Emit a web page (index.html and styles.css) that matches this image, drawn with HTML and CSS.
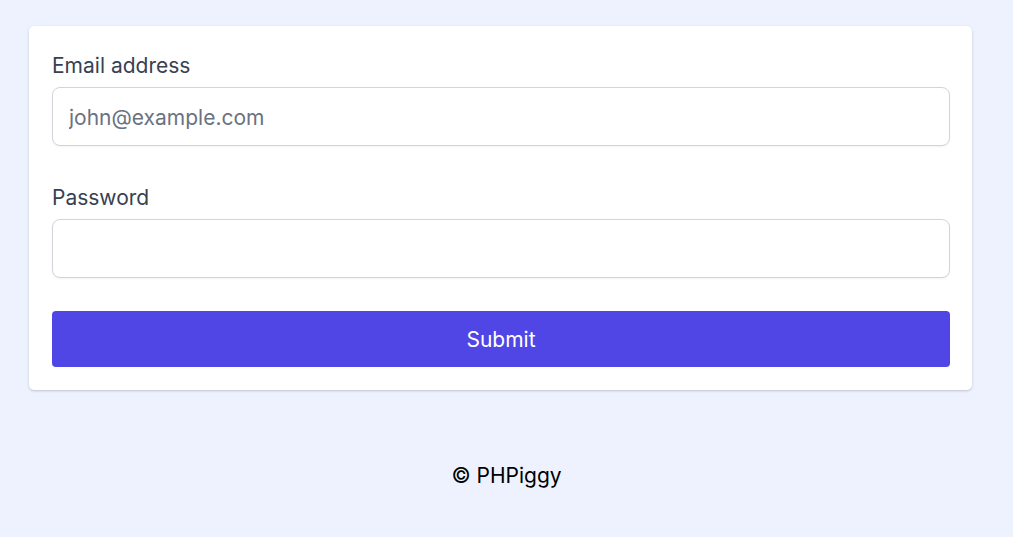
FILE: index.html
```html
<!DOCTYPE html>
<html lang="en">
<head>
<meta charset="utf-8">
<title>Login</title>
<link rel="stylesheet" href="styles.css">
</head>
<body>
<main class="page">
  <section class="card">
    <form class="form">
      <label class="field">
        <span class="label">Email address</span>
        <input class="input" type="email" placeholder="john@example.com">
      </label>
      <label class="field field-second">
        <span class="label">Password</span>
        <input class="input" type="password">
      </label>
      <button class="submit" type="button">Submit</button>
    </form>
  </section>
</main>
<footer class="footer">© PHPiggy</footer>
</body>
</html>
```

FILE: styles.css
```css
* { box-sizing: border-box; }
html, body {
  margin: 0;
  padding: 0;
}
body {
  background: #eef2ff;
  font-family: Inter, "Noto Sans", sans-serif;
  min-height: 537px;
}
.page {
  padding: 26px 41px 0 29px;
}
.card {
  background: #fff;
  border-radius: 5px;
  box-shadow: 0 1px 3px rgba(0,0,0,0.12), 0 1px 2px rgba(0,0,0,0.08);
  padding: 26px 22px 23px 23px;
}
.form {
  display: flex;
  flex-direction: column;
}
.field {
  display: flex;
  flex-direction: column;
  gap: 7px;
}
.field-second {
  margin-top: 38px;
}
.label {
  font-size: 21px;
  line-height: 28px;
  color: #374151;
}
.input {
  height: 59px;
  border: 1px solid #d1d5db;
  border-radius: 8px;
  padding: 2px 16px 0;
  font-family: inherit;
  font-size: 21px;
  color: #374151;
  box-shadow: 0 1px 2px rgba(0,0,0,0.05);
  outline: none;
}
.input::placeholder {
  color: #6b7280;
}
.submit {
  margin-top: 33px;
  height: 56px;
  border: 0;
  border-radius: 4px;
  background: #4f46e5;
  color: #fff;
  font-family: inherit;
  font-size: 21px;
}
.footer {
  text-align: center;
  margin-top: 72px;
  font-size: 21px;
  line-height: 28px;
  color: #000;
}
```
